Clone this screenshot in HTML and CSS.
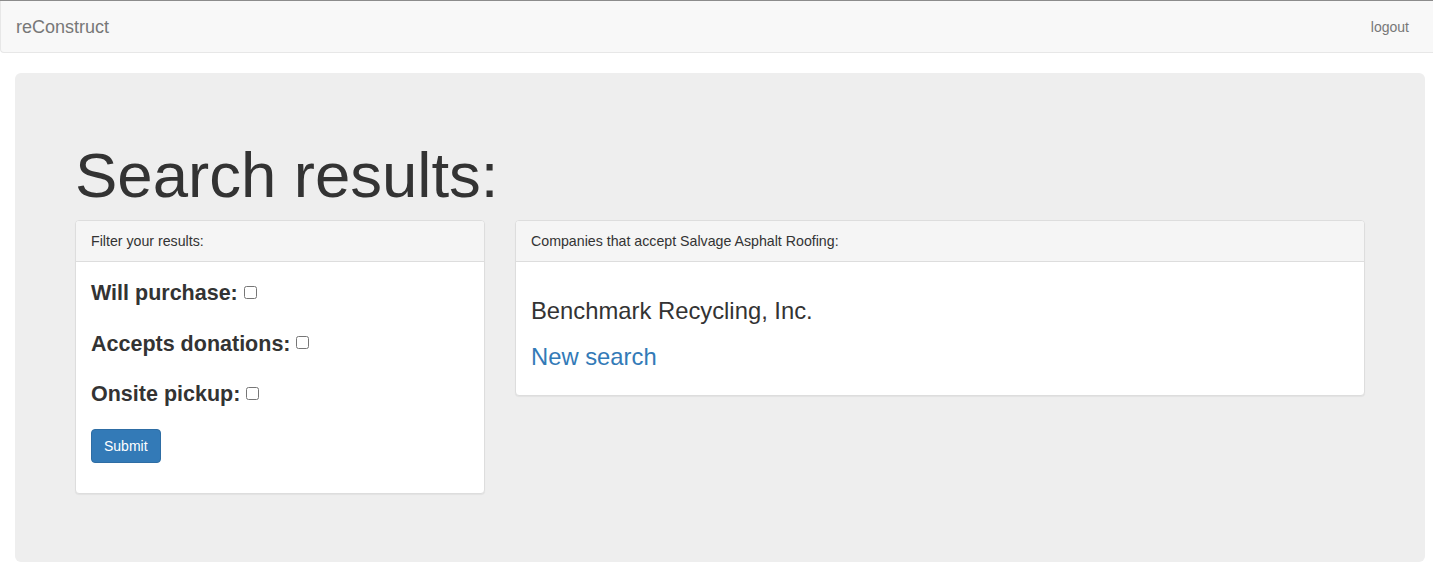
FILE: index.html
```html
<!DOCTYPE html>
<html lang="en">
<head>
<meta charset="utf-8">
<title>reConstruct</title>
<link rel="stylesheet" href="styles.css">
</head>
<body>
<nav class="navbar">
  <a class="brand" href="#">reConstruct</a>
  <a class="nav-link" href="#">logout</a>
</nav>
<div class="page">
  <div class="jumbotron">
    <h1 class="title">Search results:</h1>
    <div class="row">
      <div class="col-left">
        <div class="panel">
          <div class="panel-heading">Filter your results:</div>
          <div class="panel-body">
            <form class="filter-form">
              <label class="filter-label">Will purchase: <input type="checkbox" class="check"></label>
              <label class="filter-label">Accepts donations: <input type="checkbox" class="check"></label>
              <label class="filter-label">Onsite pickup: <input type="checkbox" class="check"></label>
              <div class="form-actions"><button type="button" class="btn-primary">Submit</button></div>
            </form>
          </div>
        </div>
      </div>
      <div class="col-right">
        <div class="panel">
          <div class="panel-heading">Companies that accept Salvage Asphalt Roofing:</div>
          <div class="panel-body">
            <h3 class="result">Benchmark Recycling, Inc.</h3>
            <h3 class="result"><a class="link" href="#">New search</a></h3>
          </div>
        </div>
      </div>
    </div>
  </div>
</div>
</body>
</html>
```

FILE: styles.css
```css
* { box-sizing: border-box; }
html, body { margin: 0; padding: 0; }
body {
  font-family: "Liberation Sans", Arial, Helvetica, sans-serif;
  font-size: 14px;
  line-height: 1.42857;
  color: #333;
  background: #fff;
  border-top: 1px solid #8c8c8c;
}
.navbar {
  display: flex;
  justify-content: space-between;
  align-items: center;
  height: 52px;
  background: #f8f8f8;
  border: 1px solid #e7e7e7;
  border-top: 0;
  border-right: 0;
  border-radius: 0 0 0 4px;
  margin-bottom: 20px;
  padding: 0 24px 0 15px;
}
.brand {
  color: #777;
  font-size: 18px;
  line-height: 20px;
  text-decoration: none;
}
.nav-link {
  color: #777;
  font-size: 14px;
  line-height: 20px;
  text-decoration: none;
}
.page { padding: 0 8px 0 15px; }
.jumbotron {
  background: #eee;
  border-radius: 6px;
  padding: 48px 60px;
}
.title {
  margin: 20px 0 10px;
  font-size: 63.5px;
  line-height: 69px;
  font-weight: normal;
  color: #333;
}
.row {
  display: flex;
  gap: 30px;
}
.col-left { width: 410px; flex: none; }
.col-right { flex: 1; }
.panel {
  background: #fff;
  border: 1px solid #ddd;
  border-radius: 4px;
  box-shadow: 0 1px 1px rgba(0,0,0,.05);
  margin-bottom: 20px;
}
.panel-heading {
  background: #f5f5f5;
  border-bottom: 1px solid #ddd;
  border-radius: 3px 3px 0 0;
  padding: 10px 15px;
  font-size: 14.2px;
  line-height: 20px;
  color: #333;
}
.panel-body { padding: 15px; }
.filter-form { display: flex; flex-direction: column; align-items: flex-start; padding-top: 1px; }
.filter-label {
  display: flex;
  align-items: center;
  font-size: 21.5px;
  font-weight: bold;
  line-height: 30px;
  height: 30px;
  margin-bottom: 20.5px;
  white-space: pre;
}
.filter-label:nth-of-type(3) { margin-bottom: 19.5px; }
.check {
  width: 13px;
  height: 13px;
  margin: -2px 0 0 0;
}
.form-actions { margin-top: 0; margin-bottom: 15px; }
.btn-primary {
  font-family: inherit;
  font-size: 14px;
  line-height: 20px;
  padding: 6px 12px;
  color: #fff;
  background: #337ab7;
  border: 1px solid #2e6da4;
  border-radius: 4px;
}
.result {
  margin: 20px 0 10px;
  font-size: 23.8px;
  line-height: 1.1;
  font-weight: normal;
  color: #333;
}
.result + .result { margin-top: 20px; }
.panel-body .result:first-child { margin-top: 21px; }
.link { color: #337ab7; text-decoration: none; }
```
